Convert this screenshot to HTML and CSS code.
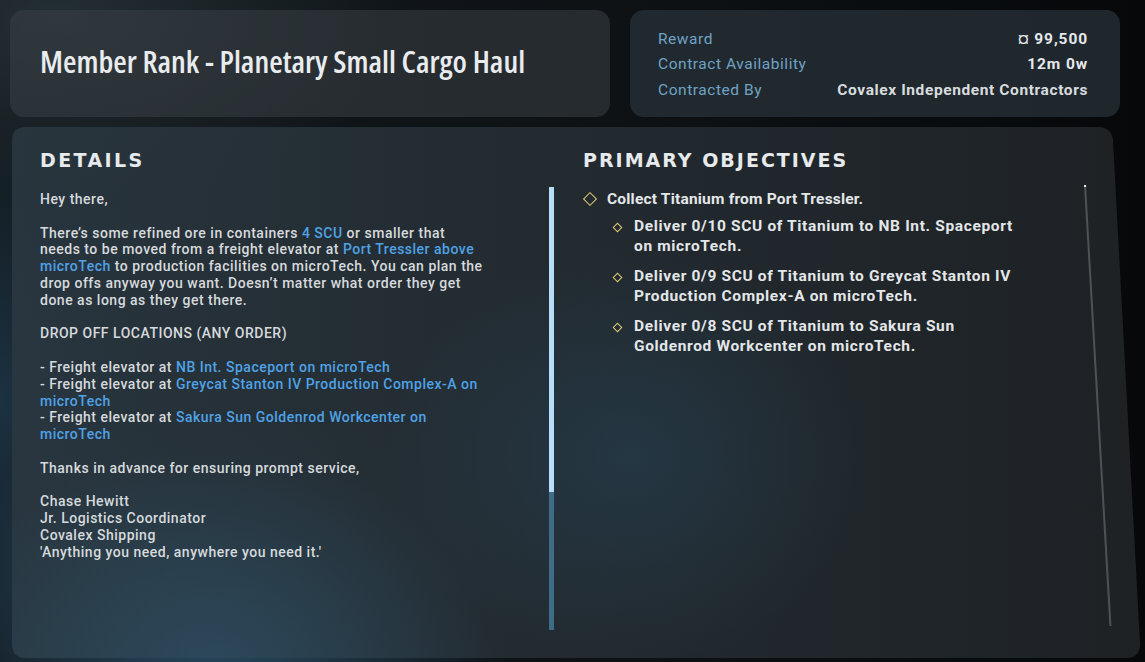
FILE: index.html
```html
<!DOCTYPE html>
<html>
<head>
<meta charset="utf-8">
<link rel="stylesheet" href="styles.css">
</head>
<body>
<div class="screen">
  <div class="top">
    <div class="title-panel">
      <h1 class="title">Member Rank - Planetary Small Cargo Haul</h1>
    </div>
    <div class="info-panel">
      <div class="info-row"><span class="label">Reward</span><span class="value">¤ 99,500</span></div>
      <div class="info-row"><span class="label">Contract Availability</span><span class="value">12m 0w</span></div>
      <div class="info-row"><span class="label">Contracted By</span><span class="value strong">Covalex Independent Contractors</span></div>
    </div>
  </div>
  <div class="main">
    <div class="col details">
      <h2 class="heading">DETAILS</h2>
      <div class="details-body">
        <div class="scroll-area">
          <p>Hey there,</p>
          <p>There’s some refined ore in containers <span class="hl">4 SCU</span> or smaller that<br>needs to be moved from a freight elevator at <span class="hl">Port Tressler above<br>microTech</span> to production facilities on microTech. You can plan the<br>drop offs anyway you want. Doesn’t matter what order they get<br>done as long as they get there.</p>
          <p>DROP OFF LOCATIONS (ANY ORDER)</p>
          <p>- Freight elevator at <span class="hl">NB Int. Spaceport on microTech</span><br>- Freight elevator at <span class="hl">Greycat Stanton IV Production Complex-A on<br>microTech</span><br>- Freight elevator at <span class="hl">Sakura Sun Goldenrod Workcenter on<br>microTech</span></p>
          <p>Thanks in advance for ensuring prompt service,</p>
          <p>Chase Hewitt<br>Jr. Logistics Coordinator<br>Covalex Shipping<br>'Anything you need, anywhere you need it.'</p>
        </div>
        <div class="scrollbar"><div class="thumb"></div></div>
      </div>
    </div>
    <div class="col objectives">
      <h2 class="heading">PRIMARY OBJECTIVES</h2>
      <div class="obj-body">
        <ul class="obj-list">
          <li class="obj main-obj"><span class="diamond big"></span><span>Collect Titanium from Port Tressler.</span></li>
          <li class="obj sub"><span class="diamond"></span><span>Deliver 0/10 SCU of Titanium to NB Int. Spaceport<br>on microTech.</span></li>
          <li class="obj sub"><span class="diamond"></span><span>Deliver 0/9 SCU of Titanium to Greycat Stanton IV<br>Production Complex-A on microTech.</span></li>
          <li class="obj sub"><span class="diamond"></span><span>Deliver 0/8 SCU of Titanium to Sakura Sun<br>Goldenrod Workcenter on microTech.</span></li>
        </ul>
        <div class="scrollbar thin"></div>
      </div>
    </div>
  </div>
</div>
</body>
</html>
```
FILE: styles.css
```css
* { box-sizing: border-box; }
html, body { margin: 0; padding: 0; }
body {
  width: 1145px;
  height: 662px;
  overflow: hidden;
  background: #0d1114;
  font-family: Roboto, "DejaVu Sans", sans-serif;
}
.screen {
  width: 1145px;
  height: 662px;
  padding: 10px 5px 4px 10px;
  display: flex;
  flex-direction: column;
  gap: 10px;
  background:
    radial-gradient(ellipse 420px 300px at 220px 620px, rgba(60,120,160,0.55), rgba(40,90,120,0) 70%),
    radial-gradient(ellipse 500px 260px at 60px 20px, rgba(70,90,95,0.35), rgba(0,0,0,0) 70%),
    radial-gradient(ellipse 260px 400px at 0px 400px, rgba(40,80,110,0.45), rgba(0,0,0,0) 70%),
    linear-gradient(90deg, #12181c 0%, #0d1114 60%, #06080a 100%);
}
.top {
  display: flex;
  gap: 20px;
  height: 107px;
}
.title-panel {
  width: 600px;
  border-radius: 14px;
  background: rgba(58,64,70,0.55);
  display: flex;
  align-items: center;
  padding: 0 0 6px 30px;
}
.title {
  margin: 0;
  font-family: "Open Sans", Roboto, sans-serif;
  font-stretch: 75%;
  font-weight: 600;
  font-size: 31px;
  color: #e9ecee;
  white-space: nowrap;
}
.info-panel {
  width: 490px;
  border-radius: 14px;
  background: rgba(40,50,58,0.75);
  padding: 16px 32px 0 28px;
  display: flex;
  flex-direction: column;
}
.info-row {
  display: flex;
  justify-content: space-between;
  height: 25.5px;
  align-items: center;
  font-size: 15.5px;
}
.label { color: #6fa3c4; letter-spacing: 0.55px; }
.value { color: #e6e9eb; font-weight: 700; letter-spacing: 0.9px; }
.value.strong { font-weight: 700; color: #d9dcde; letter-spacing: 0.6px; }
.main {
  flex: 1;
  margin-left: 2px;
  clip-path: path("M14,0 H1086 Q1100,0 1101,14 L1128,517 Q1128,531 1114,531 H14 Q0,531 0,517 V14 Q0,0 14,0 Z");
  background:
    radial-gradient(ellipse 380px 320px at 200px 560px, rgba(50,100,130,0.45), rgba(0,0,0,0) 75%),
    radial-gradient(ellipse 350px 300px at 620px 330px, rgba(40,80,105,0.35), rgba(0,0,0,0) 70%),
    linear-gradient(90deg, rgba(42,55,64,0.9) 0%, rgba(36,44,50,0.92) 50%, rgba(31,35,38,0.95) 100%);
  display: flex;
  padding: 18px 28px 30px 28px;
  gap: 29px;
}
.col { display: flex; flex-direction: column; }
.details { width: 514px; flex: none; }
.objectives { flex: 1; }
.heading {
  margin: 0;
  font-family: "DejaVu Sans", sans-serif;
  font-weight: 700;
  font-size: 19px;
  letter-spacing: 2.4px;
  color: #e7eaec;
  height: 30px;
  line-height: 30px;
}
.objectives .heading { letter-spacing: 2px; }
.details-body {
  flex: 1;
  display: flex;
  margin-top: 16px;
}
.scroll-area {
  flex: 1;
  font-size: 14px;
  font-weight: 500;
  line-height: 16.8px;
  letter-spacing: 0.5px;
  color: #d6dadd;
  white-space: nowrap;
}
.scroll-area p { margin: 0 0 16.8px 0; }
.hl { color: #4fa2e6; }
.scrollbar {
  width: 5px;
  background: #3f6d88;
  margin-top: -4px;
  margin-bottom: -2px;
}
.thumb {
  height: 305px;
  background: #b7def8;
}
.obj-body {
  flex: 1;
  display: flex;
  margin-top: 14px;
}
.obj-list {
  list-style: none;
  margin: 0;
  padding: 0;
  flex: 1;
}
.obj {
  display: flex;
  align-items: flex-start;
  font-weight: 700;
  font-size: 15.5px;
  line-height: 20px;
  color: #e4e7e9;
  gap: 11px;
  letter-spacing: 0.2px;
}
.main-obj { margin-bottom: 7px; gap: 12px; }
.sub { padding-left: 29px; margin-bottom: 10px; gap: 13px; letter-spacing: 0.65px; }
.diamond {
  flex: none;
  width: 8px;
  height: 8px;
  border: 1.6px solid #e4cd74;
  transform: rotate(45deg);
  margin-top: 7px;
  margin-left: 2px;
}
.diamond.big { width: 10px; height: 10px; margin-top: 5px; }
.sub .diamond { width: 7px; height: 7px; border-width: 1.4px; margin-top: 8px; }
.scrollbar.thin {
  width: 2px;
  background: #4c5358;
  margin-top: -4px;
  margin-bottom: 2px;
  margin-right: 26px;
  border-top: 2px solid #e8e8e8;
  transform-origin: top center;
  transform: skewX(3.3deg);
}
```
